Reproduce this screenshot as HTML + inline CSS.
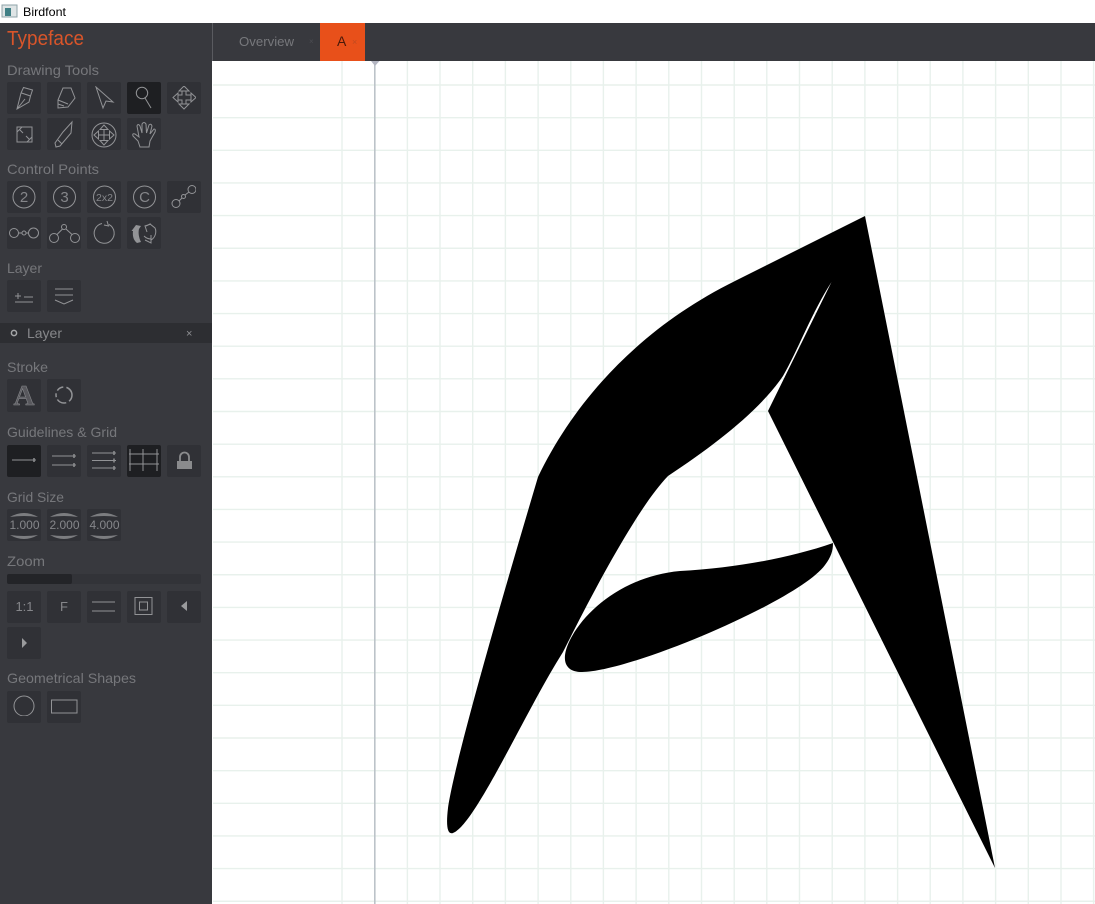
<!DOCTYPE html>
<html><head><meta charset="utf-8"><title>Birdfont</title>
<style>
html,body{margin:0;padding:0;background:#fff;width:1095px;height:904px;overflow:hidden}
svg{display:block}
text{font-family:"Liberation Sans",sans-serif}
.l{font-size:14px;fill:#76777b}
.b{fill:#303136}
.s{fill:#1e1f22}
.i{fill:none;stroke:#929396;stroke-width:1}
.t{fill:#85868a;text-anchor:middle}
</style></head><body>
<svg width="1095" height="904" viewBox="0 0 1095 904" xmlns="http://www.w3.org/2000/svg">
<defs><filter id="soft" x="0" y="0" width="100%" height="100%"><feGaussianBlur stdDeviation="0.35"/></filter></defs>
<rect width="1095" height="904" fill="#fff"/>
<!-- title bar -->
<rect x="2" y="5" width="15" height="12" fill="#dfe5e6" stroke="#8fa3a8"/>
<rect x="5" y="8" width="6" height="8" fill="#3f7f85"/>
<text x="23" y="16" font-size="12" fill="#000" textLength="43" lengthAdjust="spacingAndGlyphs">Birdfont</text>
<!-- canvas grid -->
<path fill="none" stroke="#e8f1ec" stroke-width="1.4" d="M213 85H1095M213 117.65H1095M213 150.3H1095M213 182.95H1095M213 215.6H1095M213 248.25H1095M213 280.9H1095M213 313.55H1095M213 346.2H1095M213 378.85H1095M213 411.5H1095M213 444.15H1095M213 476.8H1095M213 509.45H1095M213 542.1H1095M213 574.75H1095M213 607.4H1095M213 640.05H1095M213 672.7H1095M213 705.35H1095M213 738H1095M213 770.65H1095M213 803.3H1095M213 835.95H1095M213 868.6H1095M213 901.25H1095M342 61V904M407.4 61V904M440 61V904M472.7 61V904M505.4 61V904M538.1 61V904M570.8 61V904M603.4 61V904M636.1 61V904M668.8 61V904M701.5 61V904M734.2 61V904M766.8 61V904M799.5 61V904M832.2 61V904M864.9 61V904M897.6 61V904M930.2 61V904M962.9 61V904M995.6 61V904M1028.3 61V904M1061 61V904M1093.6 61V904"/>
<rect x="374" y="61" width="1.6" height="843" fill="#bcc3c9"/>
<path d="M371 61H379.5L375 66Z" fill="#b4b6c2"/>
<!-- glyph -->
<path fill="#000" d="M865 216L995 868L768 411L831.5 282C812 312 798 350 783 376C760 410 715 445 668 476C640 505 600 578 563 652C525 712 475 825 453 833C447 835 446 825 448 808C455 760 500 605 538 477C575 400 640 328 735 281Z"/>
<path fill="#000" d="M833 543C790 558 735 568 680 571C625 576 585 610 570 640C560 660 565 672 582 672C630 672 800 600 825 565C831 557 833 551 833 543Z"/>
<!-- tab bar -->
<rect x="212" y="23" width="883" height="38" fill="#38393e"/>
<rect x="212" y="23" width="1" height="38" fill="#5a5b60"/>
<text x="239" y="46" font-size="13" fill="#77787c" textLength="55" lengthAdjust="spacingAndGlyphs">Overview</text>
<text x="309" y="44" font-size="8" fill="#4c4d52">×</text>
<rect x="320" y="23" width="45" height="38" fill="#e8501a"/>
<text x="337" y="46" font-size="14" fill="#4a1a0a">A</text>
<text x="352" y="45" font-size="9" fill="#c04a20">×</text>
<!-- sidebar -->
<rect x="0" y="23" width="212" height="881" fill="#38393e"/>
<text x="7" y="45" font-size="20" fill="#d9552a" textLength="77" lengthAdjust="spacingAndGlyphs">Typeface</text>
<text class="l" x="7" y="75" textLength="92" lengthAdjust="spacingAndGlyphs">Drawing Tools</text>
<text class="l" x="7" y="174" textLength="92" lengthAdjust="spacingAndGlyphs">Control Points</text>
<text class="l" x="7" y="273" textLength="35" lengthAdjust="spacingAndGlyphs">Layer</text>
<text class="l" x="7" y="372" textLength="41" lengthAdjust="spacingAndGlyphs">Stroke</text>
<text class="l" x="7" y="437" textLength="110" lengthAdjust="spacingAndGlyphs">Guidelines &amp; Grid</text>
<text class="l" x="7" y="502" textLength="57" lengthAdjust="spacingAndGlyphs">Grid Size</text>
<text class="l" x="7" y="566" textLength="38" lengthAdjust="spacingAndGlyphs">Zoom</text>
<text class="l" x="7" y="683" textLength="129" lengthAdjust="spacingAndGlyphs">Geometrical Shapes</text>
<!-- buttons -->
<g class="b">
<rect x="7" y="82" width="34" height="32" rx="2"/><rect x="47" y="82" width="34" height="32" rx="2"/><rect x="87" y="82" width="34" height="32" rx="2"/><rect x="167" y="82" width="34" height="32" rx="2"/>
<rect x="7" y="118" width="34" height="32" rx="2"/><rect x="47" y="118" width="34" height="32" rx="2"/><rect x="87" y="118" width="34" height="32" rx="2"/><rect x="127" y="118" width="34" height="32" rx="2"/>
<rect x="7" y="181" width="34" height="32" rx="2"/><rect x="47" y="181" width="34" height="32" rx="2"/><rect x="87" y="181" width="34" height="32" rx="2"/><rect x="127" y="181" width="34" height="32" rx="2"/><rect x="167" y="181" width="34" height="32" rx="2"/>
<rect x="7" y="217" width="34" height="32" rx="2"/><rect x="47" y="217" width="34" height="32" rx="2"/><rect x="87" y="217" width="34" height="32" rx="2"/><rect x="127" y="217" width="34" height="32" rx="2"/>
<rect x="7" y="280" width="34" height="32" rx="2"/><rect x="47" y="280" width="34" height="32" rx="2"/>
<rect x="7" y="379" width="34" height="33" rx="2"/><rect x="47" y="379" width="34" height="33" rx="2"/>
<rect x="47" y="445" width="34" height="32" rx="2"/><rect x="87" y="445" width="34" height="32" rx="2"/><rect x="167" y="445" width="34" height="32" rx="2"/>
<rect x="7" y="509" width="34" height="32" rx="2"/><rect x="47" y="509" width="34" height="32" rx="2"/><rect x="87" y="509" width="34" height="32" rx="2"/>
<rect x="7" y="591" width="34" height="32" rx="2"/><rect x="47" y="591" width="34" height="32" rx="2"/><rect x="87" y="591" width="34" height="32" rx="2"/><rect x="127" y="591" width="34" height="32" rx="2"/><rect x="167" y="591" width="34" height="32" rx="2"/>
<rect x="7" y="627" width="34" height="32" rx="2"/>
<rect x="7" y="691" width="34" height="32" rx="2"/><rect x="47" y="691" width="34" height="32" rx="2"/>
</g>
<g class="s">
<rect x="127" y="82" width="34" height="32" rx="2"/>
<rect x="7" y="445" width="34" height="32" rx="2"/>
<rect x="127" y="445" width="34" height="32" rx="2"/>
</g>
<!-- layer bar -->
<rect x="0" y="323" width="212" height="20" fill="#2d2e32"/>
<circle cx="14" cy="333" r="2.6" fill="none" stroke="#a5a6a8" stroke-width="1.5"/>
<text x="27" y="338" font-size="14" fill="#86878a" textLength="35" lengthAdjust="spacingAndGlyphs">Layer</text>
<text x="186" y="337" font-size="11" fill="#8e8f92">×</text>
<!-- zoom bar -->
<rect x="7" y="574" width="194" height="10" rx="2" fill="#323338"/>
<rect x="7" y="574" width="65" height="10" rx="2" fill="#232428"/>
<g filter="url(#soft)">
<!-- icons: drawing tools -->
<g class="i">
<path d="M17 109L21 93L23.500 87.500L32.500 90L30.500 96L29 102ZM21.500 93L30.500 96M17 109L25 99"/>
<path d="M58 108V100L63 88H71L75 98L68 107ZM58 100L68 104M58 104L64 106"/>
<path d="M96 87L113 102L106 101L103 108Z"/>
<circle cx="142" cy="93" r="5.700"/><path d="M145 98L151 108"/>
<path d="M184 86L179 91H189ZM184 109L179 104H189ZM173 97.500L178 93V102ZM196 97.500L191 93V102ZM182 91V95H178M186 91V95H191M182 104V100H178M186 104V100H191"/>
<path d="M22 127H32V137M17 132V142H27M17 127H22L17 132ZM32 142H27L32 137ZM19.500 129.500L23 133M29.500 139.500L26 136"/>
<path d="M72 122L71 133L60 146L56 147L55 143L63 132ZM58 140L62 144"/>
<circle cx="104" cy="135" r="12"/><path d="M104 125L100 129.500H108ZM104 145L100 140.500H108ZM94 135L98.500 131V139ZM114 135L109.500 131V139ZM104 129.500V140.500M98.500 135H109.500"/>
<path d="M140 147L138 141L133 136Q132 133 135 134L139 137L137 126Q138 123 140 126L142 133L142 124Q144 121 146 124L146.500 133L149 125Q151 123 152 126L150 134L154 129Q156 129 155 132L150 141L149 147Z"/>
</g>
<!-- icons: control points -->
<g class="i">
<circle cx="24" cy="197" r="11"/><circle cx="64.500" cy="197" r="11"/><circle cx="104.500" cy="197" r="11"/><circle cx="144.500" cy="197" r="11"/>
<circle cx="176" cy="203.500" r="4"/><circle cx="183.500" cy="196.500" r="2"/><circle cx="192" cy="189.500" r="4"/><path d="M179 201L182 198M185 195L189 192"/>
<circle cx="14" cy="233" r="4.500"/><circle cx="24" cy="233" r="2"/><circle cx="33.500" cy="233" r="5"/><path d="M18.500 233H22M26 233H28.500"/>
<circle cx="54" cy="238" r="4.500"/><circle cx="75" cy="238" r="4.500"/><circle cx="64" cy="227" r="2.500"/><path d="M57 234.500L62.500 229M66 229L72 234.500"/>
<path d="M109 224.500A10 10 0 1 1 102 223.500M107 221L108.500 226L104 225"/>
<path d="M146 226L150 224L155 228C157 232 155 238 151 240M151 235V243L145 240M147 232L145 226L151 224M144 236C146 238 148 239 151 239"/>
</g>
<path d="M131.500 231L136 225L141 226L139 229C138 233 139 238 141 242L137 243C133 240 132.500 235 133 231Z" fill="#929396"/>
<g fill="#85868a" font-size="15" text-anchor="middle">
<text x="24" y="202">2</text><text x="64.500" y="202">3</text><text x="144.500" y="202">C</text>
</g>
<text class="t" x="104.500" y="201" font-size="10.500">2x2</text>
<!-- icons: layer -->
<path class="i" d="M15 296H21M18 293V299M24 297H33M15 302H33M55 289H73M55 295H73M55 300L64 304L73 300"/>
<!-- icons: stroke -->
<text x="24" y="405" font-size="29" font-weight="bold" text-anchor="middle" style="font-family:'Liberation Serif',serif" fill="#58595d" stroke="#85868a" stroke-width=".6">A</text>
<circle cx="64" cy="395" r="8" fill="none" stroke="#929396" stroke-width="1.500" stroke-dasharray="7 3.200 10 2.500 4 3"/>
<!-- icons: guidelines -->
<g class="i">
<path d="M12 460H36M52 456H76M52 465H76M92 453H116M92 460.500H116M92 468H116M130 449V471M143 449V471M157 449V471M129 454H159M129 464H159"/>
</g>
<path d="M34 458V462M74 454V458M74 463V467M114 451V455M114 458.500V462.500M114 466V470" stroke="#8e8f92" stroke-width="1.500"/>
<path d="M177 461H192V469H177Z" fill="#8a8b8d"/>
<path d="M180 461V457A4.500 4.500 0 0 1 189 457V461" fill="none" stroke="#8a8b8d" stroke-width="1.800"/>
<!-- grid size -->
<g font-size="12" fill="#85868a" text-anchor="middle">
<text x="24.500" y="529">1.000</text><text x="64.500" y="529">2.000</text><text x="104.500" y="529">4.000</text>
</g>
<path fill="#7c7d80" d="M10 517Q24 509 38 517Q24 515 10 517ZM50 517Q64 509 78 517Q64 515 50 517ZM90 517Q104 509 118 517Q104 515 90 517ZM10 535Q24 537 38 535Q24 543 10 535ZM50 535Q64 537 78 535Q64 543 50 535ZM90 535Q104 537 118 535Q104 543 90 535Z"/>
<!-- zoom tools -->
<text class="t" x="24.500" y="611" font-size="13">1:1</text>
<text class="t" x="64" y="611" font-size="13">F</text>
<path class="i" d="M92 602H115M92 611H115"/>
<rect class="i" x="135" y="597.500" width="17" height="17"/><rect class="i" x="139.500" y="602" width="8" height="8"/>
<path d="M181 606L187 601V611Z" fill="#9a9b9d"/>
<path d="M27 643L22 638V648Z" fill="#9a9b9d"/>
<!-- shapes -->
<circle class="i" cx="24" cy="706" r="10"/>
<rect class="i" x="51.500" y="700" width="25.500" height="13"/>
</g>
</svg>
</body></html>
